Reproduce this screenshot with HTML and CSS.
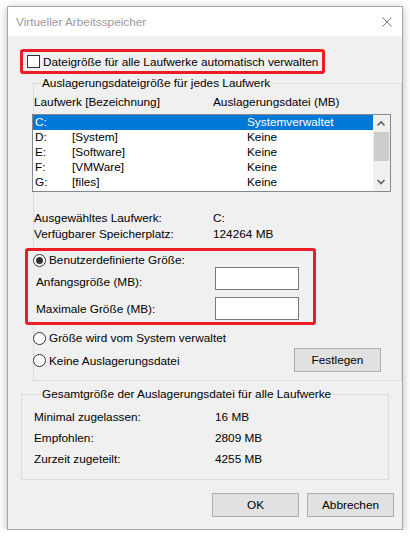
FILE: index.html
```html
<!DOCTYPE html>
<html lang="de">
<head>
    <meta charset="UTF-8">
    <meta name="viewport" content="width=device-width, initial-scale=1.0">
    <title>Virtueller Arbeitsspeicher</title>
    <link rel="stylesheet" href="styles.css">
</head>
<body>
  <div class="window">
    <div class="titlebar">
      <span class="title">Virtueller Arbeitsspeicher</span>
      <svg class="close" width="10" height="10" viewBox="0 0 10 10">
        <path d="M0.5 0.5 L9.5 9.5 M9.5 0.5 L0.5 9.5" stroke="#7a7a7a" stroke-width="1" fill="none"/>
      </svg>
    </div>

    <div class="content">
      <div class="mark auto">
        <span class="check"></span>
        <span>Dateigröße für alle Laufwerke automatisch verwalten</span>
      </div>

      <fieldset class="group drives">
        <legend>Auslagerungsdateigröße für jedes Laufwerk</legend>
        <div class="head">
          <span class="col_a">Laufwerk [Bezeichnung]</span>
          <span>Auslagerungsdatei (MB)</span>
        </div>

        <div class="listbox">
          <div class="rows">
            <div class="row selected"><span class="drv">C:</span><span class="lbl"></span><span>Systemverwaltet</span></div>
            <div class="row"><span class="drv">D:</span><span class="lbl">[System]</span><span>Keine</span></div>
            <div class="row"><span class="drv">E:</span><span class="lbl">[Software]</span><span>Keine</span></div>
            <div class="row"><span class="drv">F:</span><span class="lbl">[VMWare]</span><span>Keine</span></div>
            <div class="row"><span class="drv">G:</span><span class="lbl">[files]</span><span>Keine</span></div>
          </div>
          <div class="scrollbar">
            <div class="arrow">
              <svg width="17" height="17" viewBox="0 0 17 17"><polyline points="4.5,10.5 8,7 11.5,10.5" stroke="#606060" stroke-width="1.6" fill="none"/></svg>
            </div>
            <div class="thumb"></div>
            <div class="track"></div>
            <div class="arrow">
              <svg width="17" height="17" viewBox="0 0 17 17"><polyline points="4.5,6 8,9.5 11.5,6" stroke="#606060" stroke-width="1.6" fill="none"/></svg>
            </div>
          </div>
        </div>

        <div class="info first"><span class="col_a">Ausgewähltes Laufwerk:</span><span>C:</span></div>
        <div class="info"><span class="col_a">Verfügbarer Speicherplatz:</span><span>124264 MB</span></div>

        <div class="mark custom">
          <div class="radio_row top"><span class="radio on"></span><span>Benutzerdefinierte Größe:</span></div>
          <div class="size_row"><span class="size_label l1">Anfangsgröße (MB):</span><span class="input"></span></div>
          <div class="size_row second"><span class="size_label l2">Maximale Größe (MB):</span><span class="input"></span></div>
        </div>

        <div class="radio_row sys"><span class="radio"></span><span>Größe wird vom System verwaltet</span></div>
        <div class="radio_row none">
          <span class="radio"></span><span class="none_text">Keine Auslagerungsdatei</span>
          <button class="btn set">Festlegen</button>
        </div>
      </fieldset>

      <fieldset class="group total">
        <legend>Gesamtgröße der Auslagerungsdatei für alle Laufwerke</legend>
        <div class="sum first"><span class="col_b">Minimal zugelassen:</span><span>16 MB</span></div>
        <div class="sum"><span class="col_b">Empfohlen:</span><span>2809 MB</span></div>
        <div class="sum"><span class="col_b">Zurzeit zugeteilt:</span><span>4255 MB</span></div>
      </fieldset>

      <div class="buttons">
        <button class="btn">OK</button>
        <button class="btn">Abbrechen</button>
      </div>
    </div>
  </div>
</body>
</html>
```

FILE: styles.css
```css
body{
  margin: 0;
  background-color: #ffffff;
  font-family: "Liberation Sans", Arial, sans-serif;
  font-size: 11.8px;
  color: #000;
}

.window{
  box-sizing: border-box;
  width: 396px;
  margin: 6px 0 0 7px;
  border: 1px solid #a6a6a6;
  background-color: #f0f0f0;
  box-shadow: 0 2px 9px rgba(0,0,0,0.28);
}

.titlebar{
  height: 29px;
  background-color: #fff;
  display: flex;
  align-items: center;
  padding: 0 9px 0 8px;
}

.title{
  flex: 1;
  color: #999;
  padding-top: 1px;
}

.close{
  margin-right: 1px;
  margin-top: 1px;
}

.content{
  display: flex;
  flex-direction: column;
  align-items: flex-start;
  padding-bottom: 12px;
}

/* red annotation frames */
.mark{
  box-sizing: border-box;
  border: 3px solid #ec1c24;
  border-radius: 3px;
  background-color: #f0f0f0;
}

.auto{
  margin: 13px 0 0 12px;
  width: 305px;
  height: 25px;
  display: flex;
  align-items: center;
  padding-left: 4px;
  white-space: nowrap;
}

.check{
  width: 13px;
  height: 13px;
  flex-shrink: 0;
  box-sizing: border-box;
  border: 1px solid #333;
  background: #fff;
  margin-right: 3px;
}

.group{
  box-sizing: border-box;
  margin: 0;
  padding: 0;
  border: 1px solid #dcdcdc;
  min-width: 0;
}

.group legend{
  margin-left: 7px;
  padding: 0 1px;
  line-height: 15px;
}

.drives{
  margin: 2px 0 0 25px;
  width: 369px;
  padding-bottom: 8px;
}

.head{
  display: flex;
  margin-top: 3px;
  line-height: 16px;
}

.col_a{
  width: 179px;
  flex-shrink: 0;
}

.listbox{
  margin: 4px 0 0 -2px;
  width: 359px;
  height: 78px;
  box-sizing: border-box;
  border: 1px solid #828790;
  background: #fff;
  display: flex;
}

.rows{
  flex: 1;
}

.row{
  display: flex;
  height: 15px;
  line-height: 15px;
  padding-left: 2px;
}

.row.selected{
  background-color: #0078d7;
  color: #fff;
}

.drv{
  width: 37px;
}

.lbl{
  width: 175px;
}

.scrollbar{
  width: 17px;
  background-color: #f0f0f0;
  display: flex;
  flex-direction: column;
}

.arrow{
  height: 17px;
}

.arrow svg{
  display: block;
}

.thumb{
  height: 29px;
  margin: 0 1px;
  background-color: #cdcdcd;
}

.track{
  flex: 1;
}

.info{
  display: flex;
  line-height: 16px;
}

.info.first{
  margin-top: 18px;
}

.custom{
  margin: 6px 0 0 -9px;
  width: 291px;
  height: 77px;
  padding-left: 5px;
}

.radio_row{
  display: flex;
  align-items: center;
}

.radio{
  box-sizing: border-box;
  width: 13px;
  height: 13px;
  flex-shrink: 0;
  border: 1px solid #333;
  border-radius: 50%;
  background: #fff;
  margin-right: 3px;
  display: flex;
  align-items: center;
  justify-content: center;
}

.radio.on::after{
  content: "";
  width: 7px;
  height: 7px;
  border-radius: 50%;
  background: #333;
}

.radio_row.top{
  margin-top: 2px;
  height: 14px;
}

.size_row{
  display: flex;
  align-items: center;
  height: 23px;
  padding-left: 3px;
}

.size_row.second{
  margin-top: 7px;
}

.size_label{
  width: 179px;
  line-height: 16px;
}

.l1{
  margin-top: 6px;
}

.l2{
  margin-top: 1px;
}

.input{
  box-sizing: border-box;
  width: 84px;
  height: 23px;
  border: 1px solid #7a7a7a;
  background: #fff;
}

.sys{
  margin: 5px 0 0 -1px;
  height: 16px;
}

.none{
  margin: 2px 20px 0 -1px;
  height: 24px;
}

.none_text{
  flex: 1;
  padding-top: 2px;
}

.btn{
  box-sizing: border-box;
  width: 87px;
  height: 24px;
  border: 1px solid #adadad;
  background-color: #e1e1e1;
  font-family: inherit;
  font-size: inherit;
  color: #000;
  padding: 0;
}

.total{
  margin: 6px 0 0 13px;
  width: 368px;
  padding: 0 0 9px 12px;
}

.sum{
  display: flex;
  line-height: 21px;
}

.sum.first{
  margin-top: 5px;
}

.col_b{
  width: 181px;
}

.buttons{
  align-self: stretch;
  display: flex;
  justify-content: flex-end;
  gap: 8px;
  margin-top: 13px;
  padding-right: 8px;
}
```
